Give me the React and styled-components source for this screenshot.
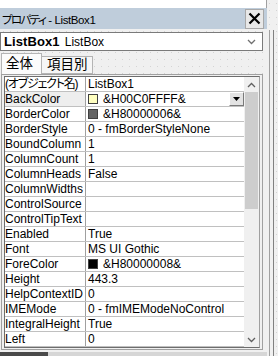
import React from "react";
import styled, { createGlobalStyle } from "styled-components";

const Global = createGlobalStyle`
  html, body { margin: 0; padding: 0; }
  body {
    width: 278px; height: 356px; overflow: hidden;
    background-color: #f0f0f0;
    background-image: radial-gradient(circle, #d4d4d4 0.6px, transparent 0.9px);
    background-size: 7px 7px;
    font-family: "Liberation Sans", "Noto Sans CJK JP", sans-serif;
    color: #000;
  }
`;

const Page = styled.div`
  display: flex;
  width: 278px;
  height: 356px;
`;

const Main = styled.div`
  width: 267px;
  display: flex;
  flex-direction: column;
`;

const RightEdge = styled.div`
  flex: 1;
  display: flex;
  padding-top: 30px;
  gap: 3px;
  padding-left: 2px;
`;

const EdgeLine = styled.div`
  width: 1px;
  background: ${p => p.$c};
`;

const TopStrip = styled.div`
  height: 8px;
  background: #fff;
  border-right: 1px solid #a0a0a0;
  box-sizing: border-box;
`;

const TitleBar = styled.div`
  height: 22px;
  background: #bfcddb;
  display: flex;
  align-items: center;
  justify-content: space-between;
  padding: 0 2px 0 2px;
`;

const TitleText = styled.span`
  font-size: 11.5px;
  font-feature-settings: "palt";
  letter-spacing: -0.4px;
`;

const Kana = styled.span`
  letter-spacing: -1.6px;
  margin-right: 3px;
`;

const CloseBtn = styled.div`
  width: 19px;
  height: 20px;
  box-sizing: border-box;
  border: 1px solid #a8a8a8;
  background: #e8e8e8;
  display: flex;
  align-items: center;
  justify-content: center;
  margin-right: 1px;
`;

const Combo = styled.div`
  margin-top: 3px;
  width: 263px;
  height: 19px;
  box-sizing: border-box;
  border: 1px solid #7a7a7a;
  background: #fff;
  display: flex;
  align-items: center;
  padding: 0 6px 0 3px;
  gap: 5px;
`;

const ComboBold = styled.span`
  font-weight: bold;
  font-size: 13px;
  letter-spacing: 0.1px;
`;

const ComboType = styled.span`
  font-size: 12px;
  flex: 1;
`;

const Tabs = styled.div`
  margin-top: 2px;
  height: 21px;
  display: flex;
  align-items: flex-end;
  padding-left: 1px;
`;

const Tab = styled.div`
  height: ${p => (p.$active ? 21 : 18)}px;
  box-sizing: border-box;
  padding: 0 ${p => (p.$active ? 8 : 4)}px 0 ${p => (p.$active ? 4 : 5)}px;
  border: 1px solid #b4b4b4;
  border-bottom: ${p => (p.$active ? "none" : "1px solid #b4b4b4")};
  border-left: ${p => (p.$active ? "1px solid #b4b4b4" : "none")};
  background: ${p => (p.$active ? "#fbfbfb" : "#f6f6f6")};
  font-size: 13.5px;
  display: flex;
  align-items: center;
  line-height: 1;
`;

const GridFrame = styled.div`
  margin-left: 1px;
  width: 262px;
  box-sizing: border-box;
  border: 1px solid #a0a0a0;
  padding: 1px 2px 1px 2px;
  background: #f0f0f0;
`;

const GridInner = styled.div`
  border: 1px solid #6d6d6d;
  border-right-color: #a0a0a0;
  display: flex;
  background: #fff;
`;

const Rows = styled.div`
  flex: 1;
  display: flex;
  flex-direction: column;
`;

const Row = styled.div`
  display: grid;
  grid-template-columns: 81px 1fr;
  height: 15px;
  box-sizing: border-box;
  border-bottom: 1px solid #c0c0c0;
  font-size: 12px;
  line-height: 14px;
  font-feature-settings: "palt";
`;

const NameCell = styled.div`
  border-right: 1px solid #a0a0a0;
  white-space: nowrap;
  overflow: hidden;
  letter-spacing: ${p => (p.$cjk ? "-1.2px" : "0")};
  background: ${p => (p.$selected ? "#eeeeee" : "#fff")};
`;

const ValueCell = styled.div`
  position: relative;
  display: flex;
  align-items: center;
  padding-left: 2px;
  gap: 5px;
  white-space: nowrap;
  overflow: hidden;
`;

const Swatch = styled.span`
  width: 10px;
  height: 10px;
  box-sizing: border-box;
  border: 1px solid #404040;
  background: ${p => p.$color};
  flex: none;
`;

const DropBtn = styled.div`
  position: absolute;
  right: 0;
  top: 0;
  width: 15px;
  height: 14px;
  box-sizing: border-box;
  background: #e3e3e3;
  border: 1px solid #fff;
  border-right-color: #7a7a7a;
  border-bottom-color: #7a7a7a;
  display: flex;
  align-items: center;
  justify-content: center;
`;

const ScrollBar = styled.div`
  width: 15px;
  display: flex;
  flex-direction: column;
  background: #f0f0f0;
`;

const ScrollBtn = styled.div`
  height: 15px;
  display: flex;
  align-items: center;
  justify-content: center;
`;

const Thumb = styled.div`
  height: 117px;
  margin: 0 1px;
  background: #cdcdcd;
`;

const Track = styled.div`
  flex: 1;
`;

const Footer = styled.div`
  margin-top: 2px;
  height: 4px;
  display: flex;
`;

const FooterPiece = styled.div`
  width: ${p => p.$w};
  flex: ${p => (p.$grow ? 1 : "none")};
  background: ${p => p.$c};
`;

const rows = [
  ["(オブジェクト名)", "ListBox1", null, false, true],
  ["BackColor", "&H00C0FFFF&", "#ffffc0", true],
  ["BorderColor", "&H80000006&", "#646464"],
  ["BorderStyle", "0 - fmBorderStyleNone"],
  ["BoundColumn", "1"],
  ["ColumnCount", "1"],
  ["ColumnHeads", "False"],
  ["ColumnWidths", ""],
  ["ControlSource", ""],
  ["ControlTipText", ""],
  ["Enabled", "True"],
  ["Font", "MS UI Gothic"],
  ["ForeColor", "&H80000008&", "#000000"],
  ["Height", "443.3"],
  ["HelpContextID", "0"],
  ["IMEMode", "0 - fmIMEModeNoControl"],
  ["IntegralHeight", "True"],
  ["Left", "0"],
];

const Chevron = ({ up, color = "#606060" }) => (
  <svg width="9" height="6" viewBox="0 0 9 6">
    <polyline
      points={up ? "1,5 4.5,1.5 8,5" : "1,1 4.5,4.5 8,1"}
      fill="none"
      stroke={color}
      strokeWidth="1.3"
    />
  </svg>
);

export default function App() {
  return (
    <Page>
      <Global />
      <Main>
        <TopStrip />
        <TitleBar>
          <TitleText>
            <Kana>プロパティ</Kana>- ListBox1
          </TitleText>
          <CloseBtn>
            <svg width="13" height="13" viewBox="0 0 13 13">
              <path d="M1.5 1.5 L11.5 11.5 M11.5 1.5 L1.5 11.5" stroke="#000" strokeWidth="2.2" />
            </svg>
          </CloseBtn>
        </TitleBar>
        <Combo>
          <ComboBold>ListBox1</ComboBold>
          <ComboType>ListBox</ComboType>
          <Chevron color="#707070" />
        </Combo>
        <Tabs>
          <Tab $active>全体</Tab>
          <Tab>項目別</Tab>
        </Tabs>
        <GridFrame>
          <GridInner>
            <Rows>
              {rows.map(([name, value, color, selected, cjk]) => (
                <Row key={name}>
                  <NameCell $selected={selected} $cjk={cjk}>{name}</NameCell>
                  <ValueCell>
                    {color && <Swatch $color={color} />}
                    <span>{value}</span>
                    {selected && (
                      <DropBtn>
                        <svg width="7" height="4" viewBox="0 0 7 4">
                          <polygon points="0,0 7,0 3.5,4" fill="#000" />
                        </svg>
                      </DropBtn>
                    )}
                  </ValueCell>
                </Row>
              ))}
            </Rows>
            <ScrollBar>
              <ScrollBtn>
                <Chevron up />
              </ScrollBtn>
              <Thumb />
              <Track />
              <ScrollBtn>
                <Chevron />
              </ScrollBtn>
            </ScrollBar>
          </GridInner>
        </GridFrame>
        <Footer>
          <FooterPiece $w="48px" $c="#4a4a4a" />
          <FooterPiece $grow $c="#d6d6d6" />
        </Footer>
      </Main>
      <RightEdge>
        <EdgeLine $c="#a0a0a0" />
        <EdgeLine $c="#808080" />
      </RightEdge>
    </Page>
  );
}
